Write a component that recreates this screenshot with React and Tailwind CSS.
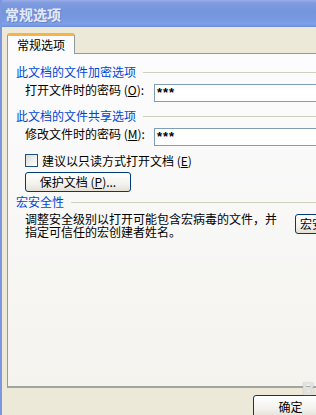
export default function App() {
  const font = "font-['Noto_Sans_CJK_SC',sans-serif]";
  return (
    <div className={`w-[316px] h-[415px] overflow-hidden relative bg-[#ECE9D8] ${font} text-[12px] leading-[12px] text-black`}>
      <div className="w-[420px] h-[415px] flex flex-col border-l-2 border-[#7C97E0]">
        {/* title bar */}
        <div className="h-[27px] shrink-0 flex items-center pl-[3px] bg-[linear-gradient(to_bottom,#9AAEE6_0px,#7F9AE0_3px,#7594DC_12px,#789BE2_21px,#7DA2E8_24px,#6E8BD8_27px)]">
          <span className="text-[14px] leading-[14px] font-bold text-[#E4EAF8] mt-[1px] [text-shadow:1px_1px_0_#6A84CC]">常规选项</span>
        </div>
        {/* tabs row */}
        <div className="h-[26px] shrink-0 flex items-end pl-[5px]">
          <div className="relative z-10 -mb-px w-[68px] h-[21px] bg-[#FCFCFE] border-x border-[#919B9C] border-t-[3px] border-t-[#F5B445] rounded-t-[3px] pl-[9px] pt-[3px]">
            常规选项
          </div>
        </div>
        {/* panel */}
        <div className="ml-[5px] h-[335px] shrink-0 border border-[#919B9C] border-b-2 border-b-[#A0A69F] bg-[linear-gradient(to_bottom,#FCFCFE,#F4F3EE)] flex flex-col pl-[8px]">
          <div className="mt-[12px] flex items-center h-[12px]">
            <span className="text-[#0046D5]">此文档的文件加密选项</span>
            <div className="flex-1 h-px bg-[#D0D0BF] ml-[7px]" />
          </div>
          <div className="mt-[6px] flex items-start h-[18px] pl-[9px]">
            <span className="w-[129px] shrink-0">打开文件时的密码 (<span className="underline">O</span>):</span>
            <div className="w-[220px] h-[18px] bg-white border border-[#7F9DB9] pl-[2px] flex items-center font-['Liberation_Sans',sans-serif] font-bold text-[13px] tracking-[1px]">***</div>
          </div>
          <div className="mt-[8px] flex items-center h-[12px]">
            <span className="text-[#0046D5]">此文档的文件共享选项</span>
            <div className="flex-1 h-px bg-[#D0D0BF] ml-[7px]" />
          </div>
          <div className="mt-[6px] flex items-start h-[18px] pl-[9px]">
            <span className="w-[129px] shrink-0">修改文件时的密码 (<span className="underline">M</span>):</span>
            <div className="w-[220px] h-[18px] bg-white border border-[#7F9DB9] pl-[2px] flex items-center font-['Liberation_Sans',sans-serif] font-bold text-[13px] tracking-[1px]">***</div>
          </div>
          <div className="mt-[8px] flex items-center h-[13px] pl-[9px]">
            <div className="w-[13px] h-[13px] border border-[#1C5180] bg-[linear-gradient(135deg,#DCDCD7,#FFFFFF)]" />
            <span className="ml-[4px]">建议以只读方式打开文档 (<span className="underline">E</span>)</span>
          </div>
          <div className="mt-[5px] pl-[9px]">
            <div className="w-[106px] h-[20px] border border-[#003C74] rounded-[3px] bg-[linear-gradient(to_bottom,#FFFFFF,#F3F2EE_60%,#E4E0D6)] flex items-center justify-center">
              保护文档 (<span className="underline">P</span>)...
            </div>
          </div>
          <div className="mt-[4px] flex items-center h-[12px]">
            <span className="text-[#0046D5]">宏安全性</span>
            <div className="flex-1 h-px bg-[#D0D0BF] ml-[7px]" />
          </div>
          <div className="mt-[4px] flex items-start pl-[9px]">
            <div className="w-[270px] shrink-0 flex flex-col">
              <span className="h-[13px] leading-[13px]">调整安全级别以打开可能包含宏病毒的文件，并</span>
              <span className="h-[13px] leading-[13px]">指定可信任的宏创建者姓名。</span>
            </div>
            <div className="mt-[2px] w-[80px] h-[20px] border border-[#003C74] rounded-[3px] bg-[linear-gradient(to_bottom,#FFFFFF,#F3F2EE_60%,#E4E0D6)] flex items-center pl-[4px]">
              宏安全性(<span className="underline">S</span>)...
            </div>
          </div>
        </div>
        {/* bottom buttons */}
        <div className="flex pl-[251px] pt-[7px]">
          <div className="w-[75px] h-[23px] border border-[#003C74] rounded-[3px] bg-[linear-gradient(to_bottom,#FFFFFF,#F3F2EE_60%,#E4E0D6)] flex items-center justify-center">
            确定
          </div>
        </div>
      </div>
      <div className="absolute left-[302px] top-[380px] font-['Liberation_Sans',sans-serif] font-bold text-[18px] leading-[18px] text-[#E2E2E2] [text-shadow:0_0_1px_#BDBDBD]">B</div>
    </div>
  );
}
